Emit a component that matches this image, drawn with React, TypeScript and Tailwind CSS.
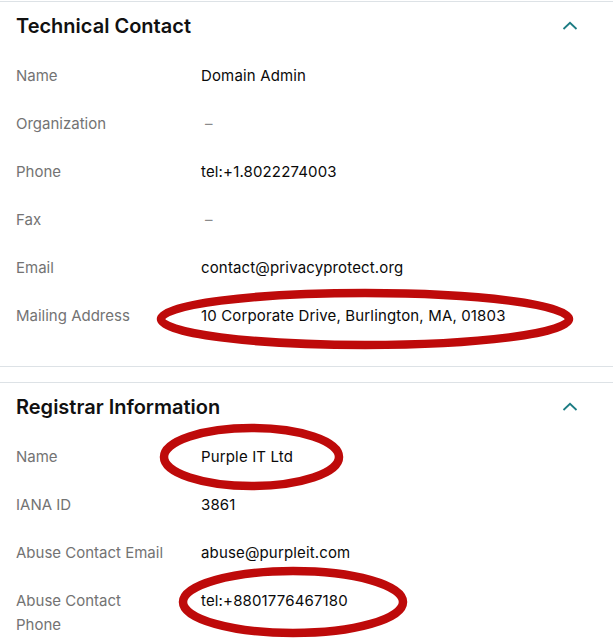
const font = { fontFamily: "Inter, 'Noto Sans', sans-serif" };

type Row = { label: string; value: string };

const technical: Row[] = [
  { label: "Name", value: "Domain Admin" },
  { label: "Organization", value: "" },
  { label: "Phone", value: "tel:+1.8022274003" },
  { label: "Fax", value: "" },
  { label: "Email", value: "contact@privacyprotect.org" },
  { label: "Mailing Address", value: "10 Corporate Drive, Burlington, MA, 01803" },
];

const registrar: Row[] = [
  { label: "Name", value: "Purple IT Ltd" },
  { label: "IANA ID", value: "3861" },
  { label: "Abuse Contact Email", value: "abuse@purpleit.com" },
  { label: "Abuse Contact Phone", value: "tel:+8801776467180" },
];

function Chevron() {
  return (
    <svg width="16" height="10" viewBox="0 0 16 10" fill="none" className="mr-[35px]">
      <path d="M1.5 8L8 1.8L14.5 8" stroke="#1b7c83" strokeWidth="1.8" />
    </svg>
  );
}

function Section(props: { title: string; rows: Row[]; last?: boolean }) {
  const { title, rows, last } = props;
  return (
    <section className={"border-t border-[#dde2e6] " + (last ? "" : "border-b pb-[26px]")}>
      <div className="flex items-center justify-between pl-4 h-12 mb-[2px]">
        <h2 className="text-[20px] leading-6 font-semibold text-[#111]">{title}</h2>
        <Chevron />
      </div>
      {rows.map((r) => (
        <div key={r.label} className="flex py-3 text-[15px] leading-6">
          <div className="w-[201px] shrink-0 pl-4 pr-2 text-[#737373]">
            <div className="max-w-[152px]">{r.label}</div>
          </div>
          <div className="text-[#0a0a0a] tracking-[0.15px]">
            {r.value || <span className="text-[#8a8a8a] pl-1">–</span>}
          </div>
        </div>
      ))}
    </section>
  );
}

export default function App() {
  return (
    <div className="relative w-[613px] h-[644px] overflow-hidden bg-white pt-px" style={font}>
      <Section title="Technical Contact" rows={technical} />
      <div className="h-[15px]" />
      <Section title="Registrar Information" rows={registrar} last />

      {/* red annotation marks drawn over the screenshot */}
      <svg className="absolute inset-0 pointer-events-none" width="613" height="644">
        <g fill="none" stroke="#be0a0a" strokeWidth="8.5">
          <ellipse cx="365" cy="319" rx="204" ry="26" />
          <ellipse cx="251.5" cy="457" rx="87.5" ry="29" />
          <ellipse cx="293" cy="602" rx="110" ry="31" />
        </g>
      </svg>
    </div>
  );
}
